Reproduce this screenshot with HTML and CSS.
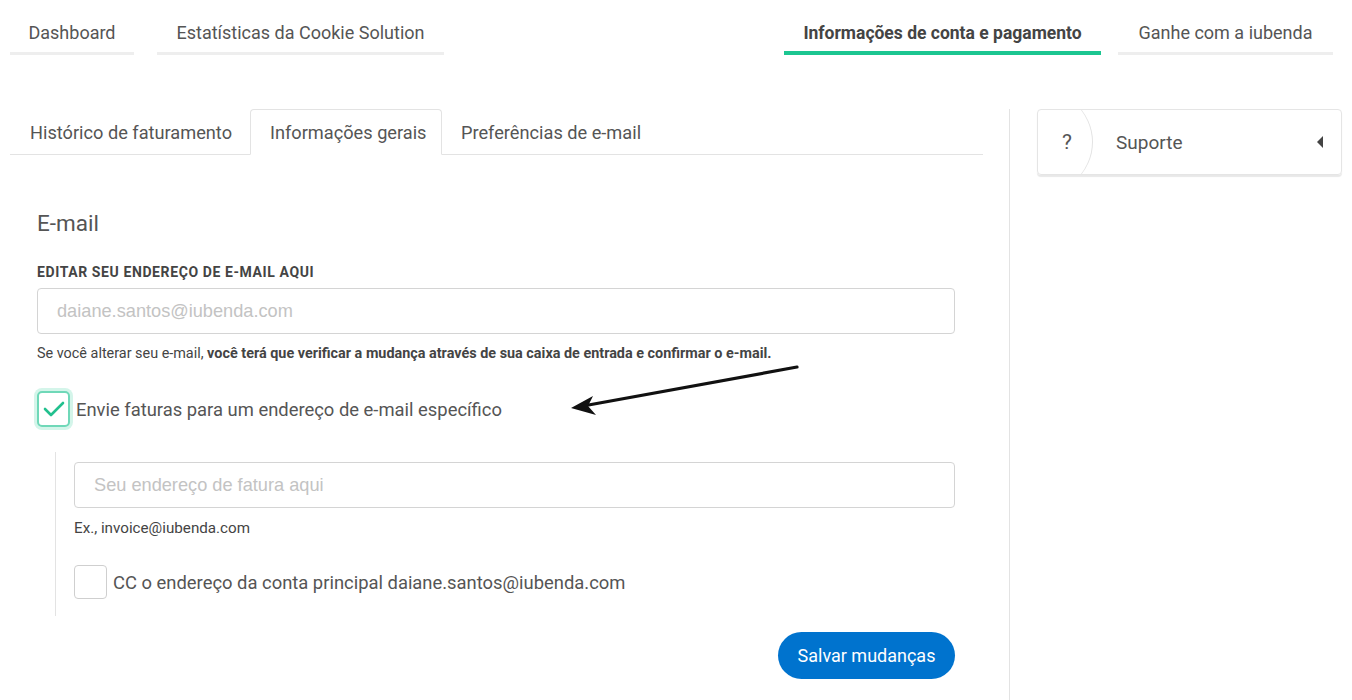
FILE: index.html
```html
<!DOCTYPE html>
<html lang="pt">
<head>
<meta charset="utf-8">
<link rel="stylesheet" href="styles.css">
</head>
<body>
<nav class="topnav">
  <div class="nav-left">
    <a class="nav-item w-dash">Dashboard</a>
    <a class="nav-item w-stats">Estatísticas da Cookie Solution</a>
  </div>
  <div class="nav-right">
    <a class="nav-item active w-info">Informações de conta e pagamento</a>
    <a class="nav-item w-earn">Ganhe com a iubenda</a>
  </div>
</nav>
<div class="page">
  <main class="main">
    <div class="tabs">
      <a class="tab">Histórico de faturamento</a>
      <a class="tab tab-active">Informações gerais</a>
      <a class="tab">Preferências de e-mail</a>
    </div>
    <section class="form">
      <h2 class="title">E-mail</h2>
      <label class="label">EDITAR SEU ENDEREÇO DE E-MAIL AQUI</label>
      <input class="input" type="text" placeholder="daiane.santos@iubenda.com">
      <p class="help">Se você alterar seu e-mail, <b>você terá que verificar a mudança através de sua caixa de entrada e confirmar o e-mail.</b></p>
      <div class="check-row check-main">
        <span class="checkbox checked">
          <svg width="22" height="16" viewBox="0 0 22 16"><path d="M2 8 L8 14 L20 2" fill="none" stroke="#22c08e" stroke-width="2.6" stroke-linecap="round" stroke-linejoin="round"/></svg>
        </span>
        <span class="check-label">Envie faturas para um endereço de e-mail específico</span>
      </div>
      <div class="sub">
        <input class="input" type="text" placeholder="Seu endereço de fatura aqui">
        <p class="help help-ex">Ex., invoice@iubenda.com</p>
        <div class="check-row">
          <span class="checkbox"></span>
          <span class="check-label">CC o endereço da conta principal daiane.santos@iubenda.com</span>
        </div>
      </div>
      <div class="actions">
        <button class="btn">Salvar mudanças</button>
      </div>
      <svg class="arrow" width="240" height="60" viewBox="0 0 240 60">
        <path d="M228 6 L14 45" stroke="#111" stroke-width="3.2" fill="none" stroke-linecap="round"/>
        <path d="M2 47 L24 35 L19 45 L27 54 Z" fill="#111"/>
      </svg>
    </section>
  </main>
  <aside class="side">
    <div class="support">
      <span class="q">?</span>
      <span class="support-label">Suporte</span>
      <span class="tri"></span>
    </div>
  </aside>
</div>
</body>
</html>
```
FILE: styles.css
```css
* { box-sizing: border-box; }
html, body { margin: 0; padding: 0; background: #fff; }
body { font-family: Roboto, "Liberation Sans", sans-serif; color: #555; width: 1352px; height: 700px; overflow: hidden; }

.topnav { display: flex; justify-content: space-between; padding: 0 19px 0 10px; height: 55px; }
.nav-left, .nav-right { display: flex; gap: 23px; align-items: flex-end; }
.nav-right { gap: 17px; }
.nav-item { display: flex; align-items: flex-start; justify-content: center; height: 55px; padding-top: 22px; line-height: 22px; font-size: 18px; color: #555; border-bottom: 3px solid #eee; }
.nav-item.active { font-weight: 700; font-size: 17.5px; color: #444; border-bottom: 4px solid #1cc691; }
.w-dash { width: 124px; }
.w-stats { width: 287px; }
.w-info { width: 317px; }
.w-earn { width: 215px; }

.page { display: flex; margin-top: 54px; }
.main { width: 973px; margin-left: 10px; position: relative; }
.tabs { display: flex; border-bottom: 1px solid #e3e3e3; height: 46px; }
.tab { display: flex; align-items: center; height: 46px; font-size: 18.2px; color: #555; padding: 0 18px 0 20px; margin-bottom: -1px; }
.tab:first-child { width: 240px; padding-left: 20px; }
.tab-active { border: 1px solid #e3e3e3; border-bottom-color: #fff; border-radius: 4px 4px 0 0; background: #fff; height: 46px; width: 192px; padding: 0 0 0 19px; }
.tab:last-child { padding-left: 19px; }

.form { padding: 56px 28px 0 27px; position: relative; }
.title { font-size: 22.5px; font-weight: 400; color: #555; margin: 0 0 29px; line-height: 24px; }
.label { display: block; font-size: 14px; font-weight: 700; color: #444; letter-spacing: 0.6px; margin-bottom: 8px; line-height: 16px; }
.input { display: block; width: 918px; height: 46px; border: 1px solid #d4d4d4; border-radius: 4px; padding: 0 19px; font-family: "Liberation Sans", Arial, sans-serif; font-size: 18.2px; color: #444; outline: none; }
.input::placeholder { color: #c3c3c3; }
.help { font-size: 14.4px; color: #444; margin: 11px 0 0; line-height: 18px; }
.help b { font-weight: 700; }
.check-row { display: flex; align-items: center; gap: 6px; }
.check-main { margin-top: 28px; }
.checkbox { width: 33px; height: 34px; border: 1px solid #cfcfcf; border-radius: 4px; display: flex; align-items: center; justify-content: center; background: #fff; }
.checkbox.checked { width: 33px; height: 36px; border: 2px solid #6fd8b8; box-shadow: 0 0 0 3px #d4f5ea; border-radius: 5px; }
.check-label { font-size: 18.4px; color: #555; }
.sub { margin: 25px 0 0 18px; border-left: 1px solid #e3e3e3; padding: 10px 0 17px 18px; }
.sub .input { width: 881px; }
.help-ex { margin-top: 11px; font-size: 15.2px; }
.sub .check-row { margin-top: 28px; }
.actions { display: flex; justify-content: flex-end; margin-top: 16px; width: 918px; }
.btn { background: #0073ce; color: #fff; border: 0; border-radius: 24px; height: 47px; width: 177px; font-family: Roboto, sans-serif; font-size: 18px; }
.arrow { position: absolute; left: 559px; top: 206px; }

.side { margin-left: 26px; border-left: 1px solid #e3e3e3; padding-left: 27px; height: 600px; }
.support { width: 305px; height: 66px; border: 1px solid #e5e5e5; border-radius: 4px; box-shadow: 0 2px 1px #e8e8e8; display: flex; align-items: center; overflow: hidden; }
.q { flex: none; width: 120px; height: 110px; margin-left: -65px; display: flex; align-items: center; justify-content: flex-end; padding-right: 20px; border-right: 1px solid #e3e3e3; border-radius: 50%; font-size: 21px; color: #555; }
.support-label { font-size: 19px; color: #555; margin-left: 23px; flex: 1; }
.tri { width: 0; height: 0; border-top: 6px solid transparent; border-bottom: 6px solid transparent; border-right: 6px solid #444; margin-right: 18px; }
```
